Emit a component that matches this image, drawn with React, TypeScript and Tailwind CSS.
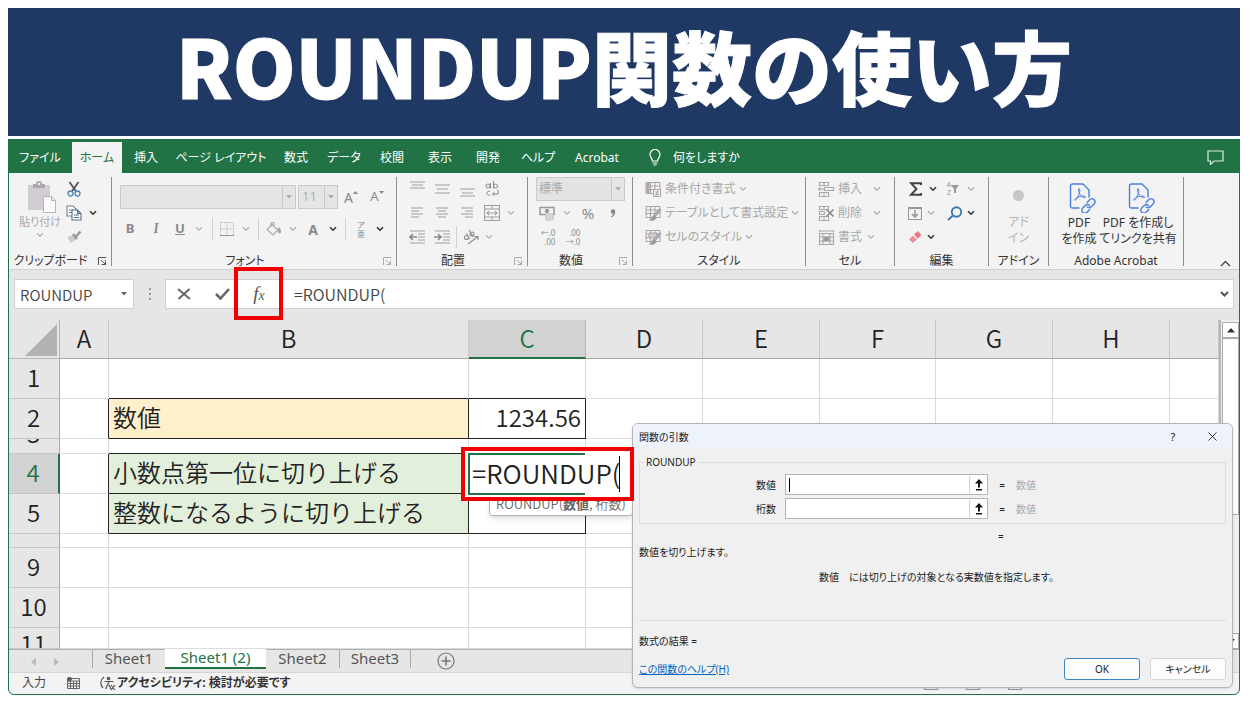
import React, { useState } from "react";

const Chevron = ({ dark = false }: { dark?: boolean }) => (
  <svg viewBox="0 0 8 6" className="h-[6px] w-[8px] shrink-0" fill="none" stroke={dark ? "#333" : "#b0b0b0"} strokeWidth={dark ? 1.6 : 1.3}>
    <path d="M1 1.2 4 4.2 7 1.2" />
  </svg>
);

const Caret = ({ color = "#aaa" }: { color?: string }) => (
  <svg viewBox="0 0 6 4" className="h-1 w-[6px] shrink-0" fill={color}>
    <path d="M0 0h6L3 3.500z" />
  </svg>
);

const Launcher = ({ dark = false }: { dark?: boolean }) => (
  <svg viewBox="0 0 10 10" className="h-[10px] w-[10px]" fill="none" stroke={dark ? "#555" : "#aaa"} strokeWidth="1">
    <path d="M1.5 9V1.5H9M4 4l4.5 4.5M8.5 4.5v4h-4" />
  </svg>
);

interface SlotProps {
  w: string;
  label?: string;
  children?: React.ReactNode;
}

const Slot = ({ w, label, children }: SlotProps) => (
  <button type="button" aria-label={label} className={`flex h-6 shrink-0 items-center justify-center ${w}`}>
    {children}
  </button>
);

interface GroupProps {
  title: string;
  w: string;
  launcher?: "dark" | "light";
  children: React.ReactNode;
}

const Group = ({ title, w, launcher, children }: GroupProps) => (
  <section className={`flex h-[89px] shrink-0 flex-col border-r border-[#8f8f8f] ${w}`}>
    <div className="h-[76px] shrink-0">{children}</div>
    <div className="flex h-4 shrink-0 items-center text-[12px] leading-4 text-[#333]">
      <span className="flex-1 text-center whitespace-nowrap">{title}</span>
      {launcher && (
        <button type="button" aria-label={`${title}の設定`} className="flex w-[18px] justify-center">
          <Launcher dark={launcher === "dark"} />
        </button>
      )}
    </div>
  </section>
);

const Lines = ({ rows }: { rows: number[][] }) => (
  <svg viewBox="0 0 16 16" className="h-4 w-4" stroke="#a5a5a5" strokeWidth="1.1">
    {rows.map(([x1, x2, y], i) => (
      <path key={i} d={`M${x1} ${y}H${x2}`} />
    ))}
  </svg>
);

const Indent = ({ right = false }: { right?: boolean }) => (
  <svg viewBox="0 0 16 16" className="h-4 w-4" fill="none" stroke="#a0a0a0" strokeWidth="1.1">
    <path d="M1 2h15M9 5h7M9 8h7M9 11h7M1 14h15" />
    <path d={right ? "M0 8h6M4 5l3 3-3 3" : "M1 8h7M4 5 1 8l3 3"} strokeWidth="1.6" stroke="#888" />
  </svg>
);

const StyleIcon = ({ kind }: { kind: number }) => (
  <svg viewBox="0 0 17 17" className="h-[17px] w-[17px]" fill="none" stroke="#a9a2a9" strokeWidth="1">
    <path d="M1 1.5h14v11H1zM1 5h14M1 8.500h14M5.500 1.500v11M10 1.500v11" />
    {kind === 0 ? (
      <>
        <path d="M3 1.500v11" strokeWidth="3" />
        <path d="M8.500 8.500h7v7h-7z" fill="#f3f3f3" />
        <path d="M10 11h4M10 13.500h4M13 9.500l-2 5" />
      </>
    ) : (
      <>
        {kind === 2 && <path d="M4 4h8v5H4z" fill="#cfcacf" />}
        <path d="M15.500 4 9 11.500" strokeWidth="3" stroke="#aaa" />
        <path d="M9.500 10.500c-3 0-2 3-5 4.500 3 1 6.500 0 6.500-3z" fill="#999" />
      </>
    )}
  </svg>
);

const CellIcon = ({ kind }: { kind: number }) => (
  <svg viewBox="0 0 17 17" className="h-[17px] w-[17px]" fill="none" stroke="#a8a8a8" strokeWidth="1.1">
    {kind === 0 && <path d="M1.500 1.500h9v3h-9zM6 1.500v3M6.500 6.500h9v3h-9zM1.500 11.500h9v4h-9zM6 11.500v4M0 8h6M2.500 6 .8 8l1.700 2" />}
    {kind === 1 && (
      <>
        <path d="M1.500 1.500h9v3h-9zM6 1.500v3M1.500 6.500h5v3h-5zM1.500 11.500h9v4h-9zM6 11.500v4" />
        <path d="m8.500 4.500 7 7M15.500 4.500l-7 7" strokeWidth="1.7" stroke="#888" />
      </>
    )}
    {kind === 2 && (
      <>
        <path d="M1.500 4.500h14v11h-14zM5 4.500v11M12 4.500v11M1.500 8h14M1.500 12h14M1.500 1v2M15.500 1v2M2 2h13" />
        <path d="M6 8h5v4H6z" fill="#999" />
      </>
    )}
  </svg>
);

const PdfIcon = () => (
  <svg viewBox="0 0 28 30" className="ml-2 h-[30px] w-[28px]" fill="none" stroke="#4a7fe0" strokeWidth="1.400" strokeLinecap="round" strokeLinejoin="round">
    <path d="M10 25H3.500A2 2 0 0 1 1.500 23V3a2 2 0 0 1 2-2H14l6 6v7" />
    <path d="M10 6c-1.300 0-.500 3.500 1.500 6s5 3.300 5 2-5-1-7.500 0-4 3-3 3.300 3.200-3.300 4.200-6.800.800-4.500-.200-4.500z" strokeWidth="1" />
    <path d="m18 19.500 2.800-2.800a3 3 0 0 1 4.300 4.300l-2.800 2.800a3 3 0 0 1-4 .200M20.500 22.500a3 3 0 0 0-4-.200l-2.800 2.800a3 3 0 0 0 4.300 4.200l2.700-2.600" />
  </svg>
);

const tabs = [
  ["ファイル", "w-16"],
  ["ホーム", "w-[50px]"],
  ["挿入", "w-12"],
  ["ページ レイアウト", "w-[102px]"],
  ["数式", "w-12"],
  ["データ", "w-12"],
  ["校閲", "w-12"],
  ["表示", "w-12"],
  ["開発", "w-12"],
  ["ヘルプ", "w-[52px]"],
  ["Acrobat", "w-[66px]"],
];

const RibbonTabs = () => (
  <nav className="flex h-[34px] items-end bg-[#217346] text-[12px] text-white">
    {tabs.map(([name, w]) => (
      <button
        key={name}
        type="button"
        className={`h-[31px] shrink-0 whitespace-nowrap ${w} ${name === "ホーム" ? "bg-[#f3f3f3] text-[#217346]" : ""}`}
      >
        {name}
      </button>
    ))}
    <button type="button" className="flex h-[31px] items-center gap-3 pl-[19px]">
      <svg viewBox="0 0 12 17" className="h-[17px] w-3" fill="none" stroke="#fff" strokeWidth="1.200">
        <path d="M3.500 12c0-2.500-2.500-3.500-2.500-6.500a5 5 0 0 1 10 0c0 3-2.500 4-2.500 6.500zM3.500 14h5M4.500 16h3" />
      </svg>
      何をしますか
    </button>
    <button type="button" aria-label="コメント" className="mr-4 ml-auto flex h-[31px] items-center">
      <svg viewBox="0 0 17 15" className="h-[15px] w-[17px]" fill="none" stroke="#d5efe0" strokeWidth="1.200">
        <path d="M1 1h15v10H7l-3.500 3.500V11H1z" />
      </svg>
    </button>
  </nav>
);

const ClipboardGroup = () => (
  <Group title="クリップボード" w="w-[104px]" launcher="dark">
    <div className="flex">
      <button type="button" className="ml-[6px] flex w-[52px] flex-col items-center pt-1 text-[11px] leading-4 text-[#a8a8a8]">
        <svg viewBox="0 0 30 33" className="ml-[4px] h-[33px] w-[30px]">
          <path d="M1 4h22v25H1z" fill="#d3cdd3" />
          <path d="M6 7V3h3a3 3 0 0 1 6 0h3v4z" fill="#a9a9a9" />
          <circle cx="12" cy="3" r="1.200" fill="#f3f3f3" />
          <path d="M16.500 15.500h8l4 4v12h-12zM24.500 15.500v4h4" fill="#fafafa" stroke="#b9b3b9" />
        </svg>
        <span className="whitespace-nowrap">貼り付け</span>
        <span className="pt-[2px]"><Chevron /></span>
      </button>
      <div>
        <Slot w="w-4" label="切り取り">
          <svg viewBox="0 0 14 16" className="h-4 w-[14px]" fill="none" strokeWidth="1.300">
            <path d="M2.500 1 9.500 11M11.500 1 4.500 11" stroke="#555" strokeWidth="1.800" />
            <circle cx="3.500" cy="12.500" r="2.500" stroke="#5585b5" />
            <circle cx="10.500" cy="12.500" r="2.500" stroke="#5585b5" />
          </svg>
        </Slot>
        <div className="flex">
          <Slot w="w-4" label="コピー">
            <svg viewBox="0 0 16 16" className="h-4 w-4" fill="#fff" stroke="#72808e" strokeWidth="1.100">
              <path d="M1 1h6l3 3v7H1zM3 5h4M3 7.500h4" />
              <path d="M6 5h5.500L15 8.500V15H6zM11.500 5v3.500H15M8 10h5M8 12.500h5" stroke="#4f6f8f" />
            </svg>
          </Slot>
          <Slot w="w-[22px]" label="コピーのオプション"><Chevron dark /></Slot>
        </div>
        <Slot w="w-4" label="書式のコピー">
          <svg viewBox="0 0 16 14" className="h-[14px] w-4">
            <path d="M1 7 7 5l3 4-5 4z" fill="#d0cad0" />
            <path d="m7 4 4 5M10 6.500 14.500 1.500" stroke="#999" strokeWidth="2.600" />
          </svg>
        </Slot>
      </div>
    </div>
  </Group>
);

const Divider = () => <span className="h-[22px] w-px bg-[#d2d2d2]" />;

const comboArrow = "flex h-6 w-[13px] items-center justify-center border-y border-r border-[#c9c9c9] bg-[#e5e5e5]";

const FontGroup = () => (
  <Group title="フォント" w="w-[285px]" launcher="light">
    <div className="flex items-center pt-2 pl-2">
      <select aria-label="フォント名" className="h-6 w-[163px] appearance-none border border-[#c9c9c9] bg-[#e5e5e5]" />
      <span className={comboArrow}><Caret /></span>
      <select aria-label="フォント サイズ" className="ml-[2px] h-6 w-[27px] appearance-none border border-[#c9c9c9] bg-[#e5e5e5] pl-[3px] text-[13px] text-[#b0b0b0]">
        <option>11</option>
      </select>
      <span className={comboArrow}><Caret /></span>
      <Slot w="w-[26px]" label="フォント サイズの拡大">
        <span className="text-[14px] text-[#8a8a8a]">A</span>
        <svg viewBox="0 0 5 12" className="h-3 w-[5px]" fill="#8a8a8a"><path d="M0 3 2.500 0 5 3z" /></svg>
      </Slot>
      <Slot w="w-[26px]" label="フォント サイズの縮小">
        <span className="text-[13px] text-[#8a8a8a]">A</span>
        <svg viewBox="0 0 5 12" className="h-3 w-[5px]" fill="#8a8a8a"><path d="M0 0h5L2.500 3z" /></svg>
      </Slot>
    </div>
    <div className="flex items-center pt-2 pl-[5px] text-[13px] font-bold text-[#8a8a8a]">
      <Slot w="w-[26px]">B</Slot>
      <Slot w="w-[26px]"><i className="font-serif">I</i></Slot>
      <Slot w="w-[22px]"><u>U</u></Slot>
      <Slot w="w-4" label="下線"><Chevron /></Slot>
      <span className="w-[5px]" />
      <Divider />
      <Slot w="w-[27px]" label="罫線">
        <svg viewBox="0 0 14 14" className="h-[14px] w-[14px]" fill="none" stroke="#c4b8c4">
          <path d="M.5 .5h13v13H.5zM7 .500v13M.500 7h13" strokeDasharray="2 1" />
          <path d="M0 13.500h14" stroke="#999" />
        </svg>
      </Slot>
      <Slot w="w-3" label="罫線のオプション"><Chevron /></Slot>
      <span className="w-[6px]" />
      <Divider />
      <Slot w="w-[30px]" label="塗りつぶし">
        <svg viewBox="0 0 16 14" className="h-[14px] w-4" fill="none" stroke="#aaa" strokeWidth="1.200">
          <path d="M6 2.500 12 8l-5 5-6-5.500zM5 5V1.500c0-1.500 3-1.500 3 0V5" />
          <path d="M13 6c2 2 2 5 .500 5s-1.500-3-.500-5z" fill="#999" />
        </svg>
      </Slot>
      <Slot w="w-2" label="色"><Chevron /></Slot>
      <Slot w="w-8"><span className="text-[14px]">A</span></Slot>
      <Slot w="w-2" label="フォントの色"><Chevron dark /></Slot>
      <span className="w-2" />
      <Divider />
      <Slot w="w-[30px]" label="ふりがな">
        <span className="flex flex-col text-[8px] leading-[9px] font-normal"><span>ア</span><span>亜</span></span>
      </Slot>
      <Slot w="w-2" label="ふりがなのオプション"><Chevron dark /></Slot>
    </div>
  </Group>
);

const AlignGroup = () => (
  <Group title="配置" w="w-[131px]" launcher="light">
    <div className="flex pl-[7px]">
      <Slot w="w-[25px]" label="上揃え"><Lines rows={[[1, 16, 1], [3, 14, 4], [1, 16, 7]]} /></Slot>
      <Slot w="w-[25px]" label="上下中央揃え"><Lines rows={[[1, 16, 4], [3, 14, 8], [1, 16, 12]]} /></Slot>
      <Slot w="w-[25px]" label="下揃え"><Lines rows={[[1, 16, 8], [3, 14, 12], [1, 16, 15]]} /></Slot>
      <Slot w="w-[25px]" label="折り返して全体を表示する">
        <svg viewBox="0 0 14 16" className="h-4 w-[14px]" fill="none" stroke="#888">
          <circle cx="3" cy="5" r="2" /><path d="M5.500 2v5.500M8.500 0v7.500" /><circle cx="10.500" cy="5" r="2" />
          <path d="M5 10.500c-4-1.500-4 5 0 3.500M13 9v4H7.500M9.500 11l-2 2 2 2" />
        </svg>
      </Slot>
    </div>
    <div className="flex pl-[7px]">
      <Slot w="w-[25px]" label="左揃え"><Lines rows={[[2, 14, 3], [2, 10, 6], [2, 14, 9], [2, 10, 12]]} /></Slot>
      <Slot w="w-[25px]" label="中央揃え"><Lines rows={[[2, 14, 3], [4, 12, 6], [2, 14, 9], [4, 12, 12]]} /></Slot>
      <Slot w="w-[25px]" label="右揃え"><Lines rows={[[2, 14, 3], [6, 14, 6], [2, 14, 9], [6, 14, 12]]} /></Slot>
      <Slot w="w-[25px]" label="セルを結合して中央揃え">
        <svg viewBox="0 0 16 16" className="h-4 w-4" fill="none" stroke="#a39ca5" strokeWidth="1.100">
          <path d="M.5 .5h15v15H.500zM.500 4h15M.500 12h15M8 .500V4M8 12v3.500M3 8h10M5 6 3 8l2 2M11 6l2 2-2 2" />
        </svg>
      </Slot>
      <Slot w="w-[14px]" label="結合のオプション"><Chevron /></Slot>
    </div>
    <div className="flex items-center pl-[7px]">
      <Slot w="w-[25px]" label="インデントを減らす"><Indent /></Slot>
      <Slot w="w-[25px]" label="インデントを増やす"><Indent right /></Slot>
      <span className="w-[2px]" />
      <Divider />
      <Slot w="w-7" label="方向">
        <svg viewBox="0 0 16 16" className="h-4 w-4" fill="none" stroke="#8d8d8d" strokeWidth="1.100">
          <circle cx="3.500" cy="8.500" r="2" /><path d="M3.500 4.500 6.500 10M6 1l4 7" /><circle cx="9" cy="5" r="2" />
          <path d="m5 15 10-7.500M11.500 7.500H15V11" />
        </svg>
      </Slot>
      <Slot w="w-2" label="方向のオプション"><Chevron /></Slot>
    </div>
  </Group>
);

const NumberGroup = () => (
  <Group title="数値" w="w-[105px]" launcher="light">
    <div className="flex pl-2">
      <select aria-label="表示形式" className="h-6 w-[76px] appearance-none border border-[#c9c9c9] bg-[#e3e3e3] pl-[2px] text-[12px] text-[#a8a8a8]">
        <option>標準</option>
      </select>
      <span className={comboArrow}><Caret /></span>
    </div>
    <div className="flex pl-[7px] text-[#8a8a8a]">
      <Slot w="w-6" label="通貨表示形式">
        <svg viewBox="0 0 16 15" className="h-[15px] w-4" fill="none" stroke="#999">
          <path d="M1 1.500h14v7H1z" strokeWidth="1.500" /><circle cx="8" cy="5" r="1.800" fill="#999" />
          <path d="M7 8h7v6H7z" fill="#ddd5dd" stroke="#c9c0c9" />
        </svg>
      </Slot>
      <Slot w="w-4" label="通貨"><Chevron /></Slot>
      <Slot w="w-[26px]"><span className="text-[15px]">%</span></Slot>
      <Slot w="w-6" label="桁区切りスタイル">
        <svg viewBox="0 0 6 9" className="h-[9px] w-[6px]" fill="#888">
          <circle cx="3" cy="2.500" r="2.200" /><path d="M5.200 2.500C5.200 5.500 4 7.500 1.500 8.500l-.500-1C2.500 6.500 3 5.500 3 4z" />
        </svg>
      </Slot>
    </div>
    <div className="flex pl-[7px] text-[8px] leading-[9px] text-[#8a8a8a]">
      <Slot w="w-[26px]" label="小数点以下の表示桁数を増やす"><span className="text-right">←.0<br />.00</span></Slot>
      <Slot w="w-6" label="小数点以下の表示桁数を減らす"><span className="text-right">.00<br />→.0</span></Slot>
    </div>
  </Group>
);

const StyleGroup = () => (
  <Group title="スタイル" w="w-[173px]">
    {["条件付き書式", "テーブルとして書式設定", "セルのスタイル"].map((name, i) => (
      <button key={name} type="button" className="flex h-6 items-center gap-[3px] pl-3 text-[12px] whitespace-nowrap text-[#a8a8a8]">
        <StyleIcon kind={i} />
        {name}
        <Chevron />
      </button>
    ))}
  </Group>
);

const CellGroup = () => (
  <Group title="セル" w="w-[89px]">
    {["挿入", "削除", "書式"].map((name, i) => (
      <button key={name} type="button" className="flex h-6 items-center gap-[3px] pl-3 text-[12px] text-[#a8a8a8]">
        <CellIcon kind={i} />
        <span className={`text-left ${name === "書式" ? "w-[26px]" : "w-8"}`}>{name}</span>
        <Chevron />
      </button>
    ))}
  </Group>
);

const EditGroup = () => (
  <Group title="編集" w="w-[94px]">
    <div className="flex pl-2">
      <Slot w="w-6" label="合計">
        <svg viewBox="0 0 13 14" className="h-[14px] w-[13px]" fill="none" stroke="#444" strokeWidth="2">
          <path d="M12 3V1.200H2L7.500 7 2 12.800h10V11" />
        </svg>
      </Slot>
      <Slot w="w-3" label="合計のオプション"><Chevron dark /></Slot>
      <Slot w="w-7" label="並べ替えとフィルター">
        <span className="flex flex-col text-[7px] leading-[8px] text-[#999]"><span>A</span><span>Z</span></span>
        <svg viewBox="0 0 8 8" className="h-2 w-2" fill="#999"><path d="M0 0h8L5 4v4H3V4z" /></svg>
      </Slot>
      <Slot w="w-2" label="並べ替え"><Chevron /></Slot>
    </div>
    <div className="flex pl-2">
      <Slot w="w-6" label="フィル">
        <svg viewBox="0 0 14 14" className="h-[14px] w-[14px]" fill="none" stroke="#999" strokeWidth="1.100">
          <path d="M.500 1.500h13v12H.500zM.500 2.500h13" /><path d="M7 4v7M4 8l3 3 3-3" strokeWidth="1.600" />
        </svg>
      </Slot>
      <Slot w="w-2" label="フィルのオプション"><Chevron /></Slot>
      <Slot w="w-8" label="検索と選択">
        <svg viewBox="0 0 16 15" className="ml-2 h-[15px] w-4" fill="none" stroke="#3b78b0" strokeWidth="1.900">
          <circle cx="9.500" cy="6" r="4.700" /><path d="M6 9.500 1 14" />
        </svg>
      </Slot>
      <Slot w="w-2" label="検索のオプション"><Chevron dark /></Slot>
    </div>
    <div className="flex pl-2">
      <Slot w="w-6" label="クリア">
        <svg viewBox="0 0 14 14" className="h-[14px] w-[14px]">
          <path d="M6 4.500 10 1l3.500 4-4 4z" fill="#e87887" /><path d="m5 5.500 4 4L5 13 1 9.500z" fill="#e8909b" />
          <path d="m5.500 5 4 4.500" stroke="#fff" />
        </svg>
      </Slot>
      <Slot w="w-2" label="クリアのオプション"><Chevron dark /></Slot>
    </div>
  </Group>
);

const Ribbon = () => (
  <div className="flex h-[97px] border-b border-[#d0d0d0] bg-[#f3f3f3] pt-[4px]">
    <ClipboardGroup />
    <FontGroup />
    <AlignGroup />
    <NumberGroup />
    <StyleGroup />
    <CellGroup />
    <EditGroup />
    <Group title="アドイン" w="w-[60px]">
      <button type="button" className="flex w-full flex-col items-center pt-[13px] text-[12px] leading-4 text-[#b5b5b5]">
        <span className="mb-[13px] h-[11px] w-[11px] rounded-full bg-[#c6c6c6]" />
        <span>アド</span>
        <span>イン</span>
      </button>
    </Group>
    <Group title="Adobe Acrobat" w="w-[135px]">
      <div className="flex pl-2 text-[12px] leading-4 text-[#333]">
        <button type="button" className="flex w-11 flex-col items-center pt-[6px]">
          <PdfIcon />
          <span className="pt-[2px] whitespace-nowrap">PDF<br />を作成</span>
        </button>
        <button type="button" className="flex w-[74px] flex-col items-center pt-[6px]">
          <PdfIcon />
          <span className="pt-[2px] whitespace-nowrap">PDF を作成し<br />てリンクを共有</span>
        </button>
      </div>
    </Group>
    <button type="button" aria-label="リボンを折りたたむ" className="mt-auto mr-[9px] mb-[2px] ml-auto">
      <svg viewBox="0 0 11 7" className="h-[7px] w-[11px]" fill="none" stroke="#444" strokeWidth="1.300">
        <path d="m1 6 4.500-4.500L10 6" />
      </svg>
    </button>
  </div>
);

interface FormulaProps {
  formula: string;
  onChange: (value: string) => void;
}

const FormulaBar = ({ formula, onChange }: FormulaProps) => (
  <div className="flex h-[50px] items-center bg-[#e6e6e6] pr-[6px] pb-[2px] pl-[6px] font-['Noto_Sans_CJK_JP',sans-serif] text-[#444]">
    <div className="flex h-[30px] w-[120px] items-center border border-[#d0d0d0] bg-white pr-[6px] pl-[5px]">
      <input aria-label="名前ボックス" defaultValue="ROUNDUP" className="w-full min-w-0 pt-[2px] text-[15px] font-[350] outline-none" />
      <Caret color="#666" />
    </div>
    <span className="flex w-[31px] flex-col items-center gap-[3px]">
      <i className="h-[2px] w-[2px] bg-[#999]" />
      <i className="h-[2px] w-[2px] bg-[#999]" />
      <i className="h-[2px] w-[2px] bg-[#999]" />
    </span>
    <div className="flex h-[30px] flex-1 items-center border border-[#d0d0d0] bg-white">
      <Slot w="w-9" label="キャンセル">
        <svg viewBox="0 0 14 12" className="h-3 w-[14px]" fill="none" stroke="#666" strokeWidth="2">
          <path d="m1 1 12 10M12.500 1 1.500 11" />
        </svg>
      </Slot>
      <Slot w="w-10" label="入力">
        <svg viewBox="0 0 15 12" className="h-3 w-[15px]" fill="none" stroke="#666" strokeWidth="2.600">
          <path d="m1 6 4.500 4.500L14 1" />
        </svg>
      </Slot>
      <div className="relative flex w-[34px] justify-center">
        <Slot w="w-[34px]" label="関数の挿入">
          <span className="font-['Liberation_Serif',serif] text-[19px] text-[#555] italic">f<span className="text-[14px]">x</span></span>
        </Slot>
        <span className="pointer-events-none absolute top-[-15px] left-[-8px] h-[53px] w-[49px] border-4 border-[#f00000]" />
      </div>
      <input
        aria-label="数式バー"
        value={formula}
        onChange={(e) => onChange(e.target.value)}
        className="ml-[18px] min-w-0 flex-1 text-[16px] font-[350] outline-none"
      />
      <button type="button" aria-label="数式バーの展開" className="mr-1">
        <svg viewBox="0 0 9 6" className="h-[6px] w-[9px]" fill="none" stroke="#555" strokeWidth="2">
          <path d="m1 1 3.500 3.500L8 1" />
        </svg>
      </button>
    </div>
  </div>
);

const columns = ["A", "B", "C", "D", "E", "F", "G", "H", ""];

interface Row {
  id: string;
  h: string;
  label?: string;
  value?: string;
  fill?: string;
  active?: boolean;
}

const rows: Row[] = [
  { id: "1", h: "h-10" },
  { id: "2", h: "h-10", label: "数値", value: "1234.56", fill: "bg-[#fff0cc]" },
  { id: "3", h: "h-[15px]" },
  { id: "4", h: "h-10", label: "小数点第一位に切り上げる", fill: "bg-[#e2efda]", active: true },
  { id: "5", h: "h-10", label: "整数になるように切り上げる", fill: "bg-[#e2efda]" },
  { id: "", h: "h-[14px]" },
  { id: "9", h: "h-10" },
  { id: "10", h: "h-10" },
  { id: "11", h: "h-[21px]" },
];

const RowLabel = ({ id }: { id: string }) => {
  // rows 3 and 11 are only partly visible
  if (id === "3") {
    return <div className="h-[14px] overflow-hidden"><div className="-mt-[18px]">{id}</div></div>;
  }
  if (id === "11") {
    return <div className="h-5 overflow-hidden"><div className="mt-[3px]">{id}</div></div>;
  }
  return <div className="pb-1">{id}</div>;
};

const ActiveCell = ({ formula, onChange }: FormulaProps) => (
  <div className="absolute top-[-7px] left-[-8px] z-20 h-[54px] w-[173px] border-4 border-[#f00000] bg-white py-[2px] pl-[3px]">
    <div className="flex h-full items-center border-l-2 border-[#217346]">
      <input
        aria-label="C4"
        value={formula}
        onChange={(e) => onChange(e.target.value)}
        className="h-full w-[117px] flex-1 pb-1 pl-[2px] text-[26px] font-[350] outline-none"
      />
      <span className="mr-[10px] h-9 w-px bg-black" />
    </div>
    <span className="pointer-events-none absolute top-[2px] left-[3px] h-[42px] w-[117px] border-y-2 border-[#217346]" />
  </div>
);

const cellEdge = (row: Row, c: string) => {
  const inBox = c === "B" || c === "C";
  if (row.label && inBox) return "border-r-[#222] border-b-[#222]";
  if ((row.id === "1" || row.id === "3") && inBox) return "border-r-[#d9d9d9] border-b-[#222]";
  if (row.label && c === "A") return "border-r-[#222] border-b-[#dcdcdc]";
  return "border-r-[#d9d9d9] border-b-[#dcdcdc]";
};

const Grid = ({ formula, onChange }: FormulaProps) => (
  <div className="flex bg-[#e6e6e6]">
    <table className="min-w-0 flex-1 table-fixed border-separate border-spacing-0 bg-white font-['Noto_Sans_CJK_JP',sans-serif] text-[24px] font-[350] text-[#222] [font-feature-settings:normal]">
      <colgroup>
        <col className="w-[52px]" />
        <col className="w-[49px]" />
        <col className="w-[360px]" />
        <col className="w-[117px]" />
        <col className="w-[117px]" />
        <col className="w-[117px]" />
        <col className="w-[116px]" />
        <col className="w-[117px]" />
        <col className="w-[117px]" />
        <col />
      </colgroup>
      <thead>
        <tr className="h-[39px]">
          <th className="border-r border-b border-[#b5b5b5] bg-[#e6e6e6] p-0" aria-label="すべて選択">
            <svg viewBox="0 0 32 32" className="mt-[2px] mr-[2px] ml-auto h-8 w-8">
              <path d="M32 0v32H0z" fill="#b2b2b2" />
            </svg>
          </th>
          {columns.map((c, i) => (
            <th
              key={i}
              className={`border-r p-0 leading-[34px] font-[350] ${
                c === "C"
                  ? "border-b-2 border-r-[#b5b5b5] border-b-[#217346] bg-[#d2d2d2] pb-[2px] text-[#217346]"
                  : "border-b border-r-[#c6c6c6] border-b-[#a8a8a8] bg-[#e6e6e6] pb-[3px]"
              }`}
            >
              {c}
            </th>
          ))}
        </tr>
      </thead>
      <tbody>
        {rows.map((row) => (
          <tr key={row.id} className={row.h}>
            <th
              className={`overflow-hidden border-b p-0 leading-6 font-[350] ${
                row.active ? "border-r-2 border-r-[#217346] border-b-[#c6c6c6] bg-[#d2d2d2] text-[#217346]" : "border-r border-r-[#a8a8a8] border-b-[#c6c6c6] bg-[#e6e6e6]"
              }`}
            >
              {row.id && <RowLabel id={row.id} />}
            </th>
            {columns.map((c, i) => (
              <td
                key={i}
                className={`relative border-r border-b p-0 leading-[34px] ${cellEdge(row, c)} ${
                  c === "B" && row.fill ? `${row.fill} pb-1 pl-1 text-left whitespace-nowrap` : ""
                } ${c === "C" && row.value ? "pr-1 pb-1 text-right" : ""}`}
              >
                {c === "B" && row.label}
                {c === "C" && row.value}
                {c === "C" && row.active && <ActiveCell formula={formula} onChange={onChange} />}
                {c === "C" && row.id === "5" && (
                  <div className="absolute top-0 left-5 z-[5] w-36 rounded-[3px] border border-[#b5b5b5] bg-white px-[6px] pb-[2px] text-[13px] leading-[18px] whitespace-nowrap text-[#666] shadow-md [font-feature-settings:'palt']">
                    ROUNDUP(<b>数値</b>, 桁数)
                  </div>
                )}
              </td>
            ))}
          </tr>
        ))}
      </tbody>
    </table>
    <div className="flex w-[21px] flex-col items-center justify-between border-l-2 border-[#b5b5b5] bg-[#f0f0f0]">
      <button type="button" aria-label="上へスクロール" className="mt-[2px] flex h-4 w-[17px] items-center justify-center border border-[#ababab] bg-white">
        <svg viewBox="0 0 8 5" className="h-[5px] w-2" fill="#333"><path d="M4 0 8 4.500H0z" /></svg>
      </button>
      <div className="mb-[118px] w-[17px] flex-1 border border-[#ababab] bg-white" />
      <button type="button" aria-label="下へスクロール" className="flex h-4 w-[17px] items-center justify-center border border-[#ababab] bg-white">
        <svg viewBox="0 0 8 5" className="h-[5px] w-2" fill="#333"><path d="M0 0h8L4 4.500z" /></svg>
      </button>
    </div>
  </div>
);

const SheetTabs = () => (
  <div className="flex h-[23px] items-start border-t border-[#b0b0b0] bg-[#e6e6e6] text-[15px] leading-4 text-[#555]">
    <span className="flex w-[84px] items-center gap-[18px] pt-2 pl-[23px]">
      <svg viewBox="0 0 5 8" className="h-2 w-[5px]" fill="#bbb"><path d="M5 0v8L0 4z" /></svg>
      <svg viewBox="0 0 5 8" className="h-2 w-[5px]" fill="#bbb"><path d="M0 0v8l5-4z" /></svg>
    </span>
    <button type="button" className="h-[18px] w-[73px] border-l border-[#aaa] pb-1">Sheet1</button>
    <button type="button" className="mt-[-1px] h-5 w-[101px] border-b-2 border-[#217346] bg-white pb-[2px] text-[#217346]">Sheet1 (2)</button>
    <button type="button" className="h-[18px] w-[73px] pb-1">Sheet2</button>
    <button type="button" className="h-[18px] w-[72px] border-x border-[#aaa] pb-1">Sheet3</button>
    <button type="button" aria-label="新しいシート" className="mt-[2px] ml-[26px]">
      <svg viewBox="0 0 18 18" className="h-[18px] w-[18px]" fill="none" stroke="#777" strokeWidth="1.200">
        <circle cx="9" cy="9" r="8" /><path d="M9 4.500v9M4.500 9h9" strokeWidth="1.600" />
      </svg>
    </button>
  </div>
);

const StatusBar = () => (
  <footer className="flex h-[23px] items-center rounded-b-md border-t border-[#d5d5d5] bg-[#f3f3f3] pb-[2px] pl-[14px] text-[12px] text-[#444]">
    <span className="w-[45px]">入力</span>
    <svg viewBox="0 0 13 12" className="mr-5 h-3 w-[13px]" fill="none" stroke="#666">
      <path d="M.500 1.500h12v10H.500zM.500 4h12M3.500 4v7M6.500 4v7M9.500 4v7M1 6.500h11M1 9h11" />
      <circle cx="2.500" cy="2" r="2" fill="#555" />
    </svg>
    <svg viewBox="0 0 16 16" className="h-4 w-4" fill="none" stroke="#555" strokeWidth="1.200">
      <path d="M4 2C0 5 0 10 3 13" /><circle cx="8.500" cy="3.500" r="1.200" fill="#555" /><path d="M4.500 6.500h9M9 7l-3.500 7M9 10l2 4M11 10l4 5M15 10l-4 5" />
    </svg>
    <b className="pl-[1px] text-[#333]">アクセシビリティ: 検討が必要です</b>
    <span className="mr-[218px] ml-auto flex items-center gap-7">
      <i className="h-[14px] w-[14px] border border-[#999]" />
      <i className="h-[14px] w-[14px] border border-[#999]" />
      <i className="h-[14px] w-[14px] border border-[#999]" />
    </span>
  </footer>
);

interface ArgumentProps {
  id: string;
  name: string;
  focus?: boolean;
}

const Argument = ({ id, name, focus = false }: ArgumentProps) => (
  <div className="flex h-[21px] items-center">
    <label htmlFor={id} className="w-[136px] text-right">{name}</label>
    <div className="ml-[9px] flex h-[21px] w-[203px] items-center border border-[#b5b5b5] bg-white">
      {focus && <span className="ml-[3px] h-[14px] w-px bg-black" />}
      <input id={id} className="h-[19px] min-w-0 flex-1 bg-transparent px-1 outline-none" />
      <button type="button" aria-label={`${name}を選択`} className="flex h-[19px] w-[18px] items-center justify-center rounded-[2px] border-l border-[#d5d5d5]">
        <svg viewBox="0 0 8 12" className="h-3 w-2" fill="#111">
          <path d="M4 0 8 4.500H5V8.500H3V4.500H0zM1 10h6v1.500H1z" />
        </svg>
      </button>
    </div>
    <span className="w-7 text-center">=</span>
    <span className="text-[#aaa]">数値</span>
  </div>
);

const FunctionDialog = () => (
  <div role="dialog" aria-label="関数の引数" className="absolute right-[7px] bottom-[7px] z-10 h-[265px] w-[601px] rounded-[6px] border border-[#b5b5b5] bg-[#f0f0f0] text-[10px] leading-[14px] text-[#222] shadow-sm">
    <div className="flex h-[25px] items-center rounded-t-[5px] bg-[#eef2fa] pr-[15px] pl-[6px]">
      <span className="flex-1">関数の引数</span>
      <button type="button" className="w-[14px] text-[11px]">?</button>
      <button type="button" aria-label="閉じる" className="ml-[28px]">
        <svg viewBox="0 0 9 9" className="h-[9px] w-[9px]" stroke="#333">
          <path d="m.5 .5 8 8M8.500 .500l-8 8" />
        </svg>
      </button>
    </div>
    <div className="px-[6px]">
      <fieldset className="mt-[6px] h-[69px] border border-[#dcdcdc]">
        <legend className="ml-1 px-[2px] text-[10px]">ROUNDUP</legend>
        <div className="flex flex-col gap-[3px] pt-[5px]">
          <Argument id="number" name="数値" focus />
          <Argument id="digits" name="桁数" />
        </div>
      </fieldset>
      <p className="pt-[5px] pl-[359px]">=</p>
      <p className="pt-[2px]">数値を切り上げます。</p>
      <p className="pt-[11px] pl-[180px]">数値　には切り上げの対象となる実数値を指定します。</p>
      <p className="mt-[36px] border-t border-[#dcdcdc] pt-[13px]">数式の結果 =</p>
      <div className="mt-[10px] flex items-center gap-[10px]">
        <a href="#help" className="mr-auto text-[#0563c1] underline">この関数のヘルプ(H)</a>
        <button type="button" className="h-[22px] w-[76px] rounded-[3px] border border-[#3b86c8] bg-[#fdfdfd]">OK</button>
        <button type="button" className="h-[22px] w-[76px] rounded-[3px] border border-[#d5d5d5] bg-[#fdfdfd]">キャンセル</button>
      </div>
    </div>
  </div>
);

const App: React.FC = () => {
  const [formula, setFormula] = useState<string>("=ROUNDUP(");

  return (
    <div className="flex min-w-[1250px] flex-col gap-[3px] bg-white pt-2 pr-[10px] pb-[7px] pl-2 font-['Noto_Sans_CJK_JP',sans-serif]">
      <h1 className="flex h-32 items-center justify-center bg-[#203864] pb-4 text-[80px] leading-none font-black text-white [-webkit-text-stroke:1px_white]">
        ROUNDUP関数の使い方
      </h1>
      <main className="relative rounded-b-md font-['Noto_Sans','Noto_Sans_CJK_JP',sans-serif] outline-1 -outline-offset-1 outline-[#217346] [font-feature-settings:'palt']">
        <RibbonTabs />
        <Ribbon />
        <FormulaBar formula={formula} onChange={setFormula} />
        <Grid formula={formula} onChange={setFormula} />
        <SheetTabs />
        <StatusBar />
        <FunctionDialog />
      </main>
    </div>
  );
};

export default App;
